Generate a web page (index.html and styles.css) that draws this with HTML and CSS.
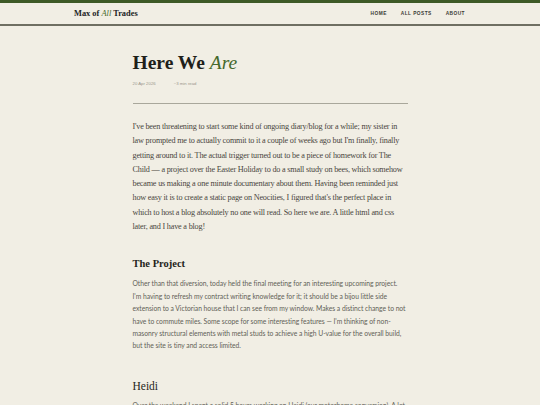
FILE: index.html
```html
<!DOCTYPE html>
<html lang="en">
<head>
<meta charset="utf-8">
<title>Here We Are — Max of All Trades</title>
<link rel="stylesheet" href="styles.css">
</head>
<body>
<header class="site-header">
  <div class="header-inner">
    <a class="logo" href="#">Max of <em>All</em> Trades</a>
    <nav class="nav">
      <a href="#">Home</a>
      <a href="#">All Posts</a>
      <a href="#">About</a>
    </nav>
  </div>
</header>
<main class="post">
  <h1 class="post-title">Here We <em>Are</em></h1>
  <div class="meta"><span>20 Apr 2026</span><span>~3 min read</span></div>
  <hr class="rule">
  <p class="lead">I've been threatening to start some kind of ongoing diary/blog for a while; my sister in law prompted me to actually commit to it a couple of weeks ago but I'm finally, finally getting around to it. The actual trigger turned out to be a piece of homework for The Child — a project over the Easter Holiday to do a small study on bees, which somehow became us making a one minute documentary about them. Having been reminded just how easy it is to create a static page on Neocities, I figured that's the perfect place in which to host a blog absolutely no one will read. So here we are. A little html and css later, and I have a blog!</p>
  <h2 class="section">The Project</h2>
  <p class="body">Other than that diversion, today held the final meeting for an interesting upcoming project. I'm having to refresh my contract writing knowledge for it; it should be a bijou little side extension to a Victorian house that I can see from my window. Makes a distinct change to not have to commute miles. Some scope for some interesting features — I'm thinking of non-masonry structural elements with metal studs to achieve a high U-value for the overall build, but the site is tiny and access limited.</p>
  <h2 class="section light">Heidi</h2>
  <p class="body">Over the weekend I spent a solid 5 hours working on Heidi (our motorhome conversion). A lot of it was fiddly work that nobody will ever notice.</p>
</main>
</body>
</html>
```
FILE: styles.css
```css
html, body {
  margin: 0;
  padding: 0;
  background: #f1eee4;
}
body {
  font-family: "Liberation Serif", serif;
  color: #2a2a24;
}
a { text-decoration: none; color: inherit; }

.site-header {
  border-top: 3px solid #3e5a26;
  border-bottom: 2px solid #6f6f62;
}
.header-inner {
  width: 392px;
  margin: 0 auto;
  height: 21px;
  display: flex;
  align-items: center;
  justify-content: space-between;
}
.logo {
  font-family: "Liberation Serif", serif;
  font-size: 8.4px;
  font-weight: bold;
  color: #23231f;
}
.logo em { color: #46692c; font-weight: normal; }
.nav {
  display: flex;
  gap: 14px;
  padding-right: 1px;
}
.nav a {
  font-family: "Liberation Sans", sans-serif;
  font-size: 4.8px;
  font-weight: bold;
  letter-spacing: 0.45px;
  text-transform: uppercase;
  color: #3a3a35;
}

.post {
  width: 275px;
  margin: 0 auto;
  padding-top: 24px;
}
.post-title {
  margin: 0;
  font-size: 19.5px;
  line-height: 26px;
  font-weight: bold;
  color: #1f1f1a;
}
.post-title em { color: #46692c; font-weight: normal; }
.meta {
  margin-top: 5px;
  display: flex;
  gap: 18px;
  font-family: "Liberation Sans", sans-serif;
  font-size: 4.3px;
  color: #9a978c;
}
.rule {
  margin: 17px 0 0;
  border: 0;
  border-top: 1.5px solid #a9a79b;
}
.lead {
  margin: 16px 0 0;
  font-size: 8.2px;
  letter-spacing: -0.2px;
  line-height: 14.3px;
  color: #4a463e;
}
.section {
  margin: 23px 0 0;
  font-size: 10.5px;
  line-height: 14px;
  font-weight: bold;
  color: #1f1f1a;
}
.section.light { font-weight: normal; font-size: 11.5px; margin-top: 27px; }
.body {
  margin: 6px 0 0;
  font-family: "Lato", sans-serif;
  font-size: 6.75px;
  letter-spacing: -0.03px;
  line-height: 12.4px;
  color: #625f57;
}
```
